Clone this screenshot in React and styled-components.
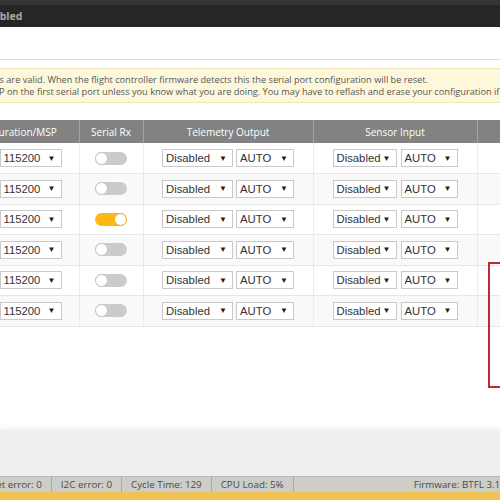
import React from 'react';
import styled, { createGlobalStyle } from 'styled-components';

const Global = createGlobalStyle`
  html, body { margin: 0; padding: 0; background: #fff; }
  body { font-family: "Open Sans", "Liberation Sans", sans-serif; }
`;

const Page = styled.div`
  position: relative;
  width: 500px;
  height: 500px;
  overflow: hidden;
  display: flex;
  flex-direction: column;
  background: #fff;
`;

const TopBar = styled.header`
  flex: none;
  height: 22px;
  border-top: 5px solid #353535;
  background: #262626;
  display: flex;
  align-items: center;
`;

const TopTitle = styled.span`
  margin-left: -64px;
  font-weight: 700;
  font-size: 10.5px;
  color: #a9a9a9;
  white-space: nowrap;
`;

const Main = styled.main`
  flex: 1;
  min-height: 0;
  display: flex;
  flex-direction: column;
`;

const Rule = styled.div`
  flex: none;
  height: 1px;
  margin-top: 32px;
  background: #e6dfb4;
`;

const Note = styled.div`
  flex: none;
  margin-top: 8px;
  padding: 5px 0 4px;
  background: #fdf8dc;
  border-top: 1px solid #efe7b8;
  border-bottom: 1px solid #efe7b8;
  overflow: hidden;
`;

const NoteLine = styled.p`
  margin: 0 0 0 -${p => p.$shift}px;
  font-size: 9.2px;
  line-height: 12px;
  color: #575757;
  white-space: nowrap;
`;

const Table = styled.table`
  flex: none;
  margin: 17px 0 0 -53px;
  border-collapse: collapse;
  table-layout: fixed;
  width: 650px;
`;

const Th = styled.th`
  height: 23px;
  padding: 0;
  background: #828282;
  color: #fff;
  font-weight: 400;
  font-size: 10px;
  text-align: center;
  white-space: nowrap;
  border-right: 1px solid #a2a2a2;
`;

const Tr = styled.tr`
  height: 30.5px;
  background: #fff;
  &:nth-child(even) { background: #f9f9f9; }
`;

const Td = styled.td`
  padding: 0;
  border-right: 1px solid #ebebeb;
  border-bottom: 1px solid #e6e6e6;
  vertical-align: middle;
`;

const CellRow = styled.div`
  display: flex;
  align-items: center;
  justify-content: ${p => p.$end ? 'flex-end' : 'center'};
  gap: ${p => p.$gap || 3}px;
  padding-right: ${p => p.$pr || 0}px;
`;

const SelectBox = styled.div`
  box-sizing: border-box;
  display: inline-flex;
  align-items: center;
  justify-content: space-between;
  width: ${p => p.$w}px;
  height: 18px;
  padding: 0 5px 0 3px;
  border: 1px solid #c9c9c9;
  background: #fff;
  font-family: "Liberation Sans", Arial, sans-serif;
  font-size: 11.3px;
  color: #333;
  white-space: nowrap;
`;

const Arrow = styled.span`
  font-size: 8px;
  color: #1e1e1e;
`;

const Toggle = styled.span`
  position: relative;
  display: inline-block;
  width: 32px;
  height: 13px;
  border-radius: 7px;
  background: ${p => p.$on ? '#fdb813' : '#cbcbcb'};
  &::after {
    content: '';
    position: absolute;
    top: 0;
    ${p => p.$on ? 'right: 0;' : 'left: 0;'}
    box-sizing: border-box;
    width: 13px;
    height: 13px;
    border-radius: 50%;
    background: #fff;
    border: 1px solid ${p => p.$on ? '#f0b018' : '#c4c4c4'};
  }
`;

const Annotation = styled.div`
  position: absolute;
  left: 488px;
  top: 262px;
  width: 40px;
  height: 122px;
  border: 2px solid #c4262e;
`;

const Toolbar = styled.div`
  flex: none;
  height: 46px;
  background: #efefef;
  box-shadow: 0 -2px 5px rgba(0, 0, 0, 0.06);
`;

const StatusBar = styled.footer`
  flex: none;
  box-sizing: border-box;
  height: 16px;
  display: flex;
  align-items: center;
  margin-left: -34px;
  background: #cdcdc8;
  border-top: 1px solid #b9b9b5;
  font-size: 9.8px;
  color: #4a4a4a;
  white-space: nowrap;
`;

const StatusItem = styled.span`
  padding: 0 9px;
  line-height: 15px;
  border-right: ${p => p.$last ? 'none' : '1px solid #a9a9a5'};
`;

const Spacer = styled.span`
  flex: 0 0 111px;
`;

const YellowBar = styled.div`
  flex: none;
  height: 8px;
  background: #f0c253;
`;

const Sel = ({ w, children }) => (
  <SelectBox $w={w}>
    <span>{children}</span>
    <Arrow>▼</Arrow>
  </SelectBox>
);

const rows = [false, false, true, false, false, false];

export default function App() {
  return (
    <>
      <Global />
      <Page>
        <TopBar>
          <TopTitle>Arming Disabled</TopTitle>
        </TopBar>
        <Main>
          <Rule />
          <Note>
            <NoteLine $shift={109}>Note: not all combinations are valid. When the flight controller firmware detects this the serial port configuration will be reset.</NoteLine>
            <NoteLine $shift={109}>Note: Do NOT disable MSP on the first serial port unless you know what you are doing. You may have to reflash and erase your configuration if you do.</NoteLine>
          </Note>
          <Table>
            <colgroup>
              <col style={{ width: 132 }} />
              <col style={{ width: 64 }} />
              <col style={{ width: 170 }} />
              <col style={{ width: 164 }} />
              <col style={{ width: 120 }} />
            </colgroup>
            <thead>
              <tr>
                <Th>Configuration/MSP</Th>
                <Th>Serial Rx</Th>
                <Th>Telemetry Output</Th>
                <Th>Sensor Input</Th>
                <Th>Peripherals</Th>
              </tr>
            </thead>
            <tbody>
              {rows.map((on, i) => (
                <Tr key={i}>
                  <Td>
                    <CellRow $end $pr={17} $gap={10}>
                      <Toggle $on={i === 0} />
                      <Sel w={62}>115200</Sel>
                    </CellRow>
                  </Td>
                  <Td>
                    <CellRow><Toggle $on={on} /></CellRow>
                  </Td>
                  <Td>
                    <CellRow $gap={3}>
                      <Sel w={71}>Disabled</Sel>
                      <Sel w={58}>AUTO</Sel>
                    </CellRow>
                  </Td>
                  <Td>
                    <CellRow $gap={4}>
                      <Sel w={64}>Disabled</Sel>
                      <Sel w={57}>AUTO</Sel>
                    </CellRow>
                  </Td>
                  <Td />
                </Tr>
              ))}
            </tbody>
          </Table>
        </Main>
        <Toolbar />
        <StatusBar>
          <StatusItem>Packet error: 0</StatusItem>
          <StatusItem>I2C error: 0</StatusItem>
          <StatusItem>Cycle Time: 129</StatusItem>
          <StatusItem>CPU Load: 5%</StatusItem>
          <Spacer />
          <StatusItem $last>Firmware: BTFL 3.1.6, Target: OMNIBUSF4SD</StatusItem>
        </StatusBar>
        <YellowBar />
        <Annotation />
      </Page>
    </>
  );
}
